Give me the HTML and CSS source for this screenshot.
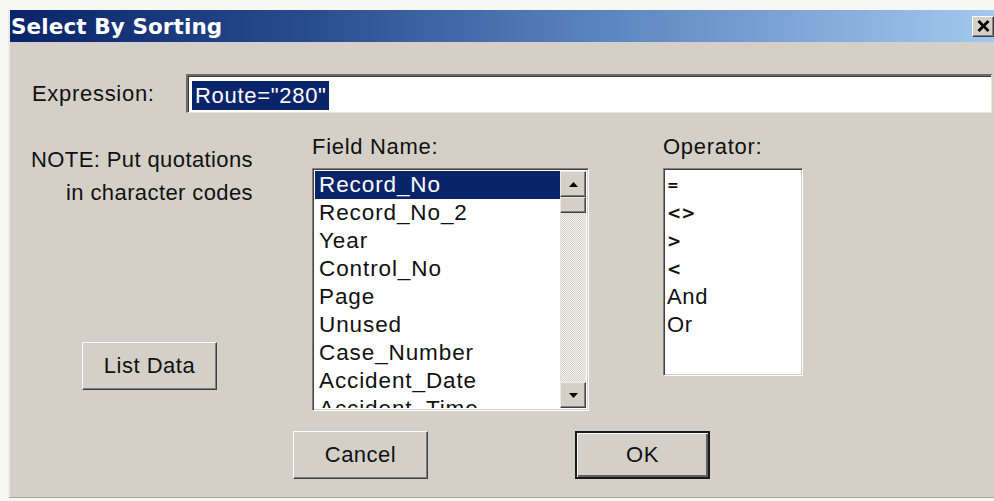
FILE: index.html
```html
<!DOCTYPE html>
<html lang="en">
<head>
<meta charset="utf-8">
<title>Select By Sorting</title>
<link rel="stylesheet" href="styles.css">
</head>
<body>
<div class="desktop">
  <div class="window">
    <div class="titlebar">
      <span class="title">Select By Sorting</span>
      <button class="close" aria-label="Close">
        <svg width="13" height="12" viewBox="0 0 13 12"><path d="M1.5 1 L11.5 11 M11.5 1 L1.5 11" stroke="#000" stroke-width="2.8" fill="none"/></svg>
      </button>
    </div>
    <div class="client">
      <div class="expr-row">
        <span class="expr-label">Expression:</span>
        <div class="textbox"><span class="sel">Route="280"</span></div>
      </div>

      <div class="main">
        <div class="left-col">
          <p class="note">NOTE: Put quotations<br>in character codes</p>
          <button class="btn list-btn">List Data</button>
        </div>

        <div class="field-col">
          <div class="cap">Field Name:</div>
          <div class="listbox fields">
            <ul class="items">
              <li class="selected">Record_No</li>
              <li>Record_No_2</li>
              <li>Year</li>
              <li>Control_No</li>
              <li>Page</li>
              <li>Unused</li>
              <li>Case_Number</li>
              <li>Accident_Date</li>
              <li>Accident_Time</li>
            </ul>
            <div class="scrollbar">
              <div class="sb-btn">
                <svg width="9" height="5" viewBox="0 0 9 5"><path d="M0 5 L4.5 0 L9 5 Z" fill="#000"/></svg>
              </div>
              <div class="sb-thumb"></div>
              <div class="sb-track"></div>
              <div class="sb-btn">
                <svg width="9" height="5" viewBox="0 0 9 5"><path d="M0 0 L9 0 L4.5 5 Z" fill="#000"/></svg>
              </div>
            </div>
          </div>
        </div>

        <div class="op-col">
          <div class="cap">Operator:</div>
          <div class="listbox ops">
            <ul class="items">
              <li class="sym eq">=</li>
              <li class="sym">&lt;&gt;</li>
              <li class="sym">&gt;</li>
              <li class="sym">&lt;</li>
              <li>And</li>
              <li>Or</li>
            </ul>
          </div>
        </div>
      </div>

      <div class="actions">
        <button class="btn">Cancel</button>
        <button class="btn default">OK</button>
      </div>
    </div>
  </div>
</div>
</body>
</html>
```

FILE: styles.css
```css
html, body {
  margin: 0;
  padding: 0;
  overflow: hidden;
  background: #f7f7f5;
}

body {
  width: 994px;
  height: 501px;
  font-family: "Liberation Sans", Arial, sans-serif;
  color: #111;
}

.desktop {
  padding-top: 10px;
  padding-left: 8px;
}

/* dialog frame */
.window {
  width: 1000px;
  height: 488px;
  background: #d4d0c8;
  border-left: 2px solid #ecebe6;
  box-sizing: border-box;
  border-bottom: 1px solid #a8a59e;
}

.titlebar {
  height: 32px;
  display: flex;
  align-items: center;
  padding-left: 1px;
  background: linear-gradient(to right, #0a246a 0%, #284d8f 30%, #5c86c0 60%, #a6caf0 100%);
}

.title {
  font-family: "DejaVu Sans", "Liberation Sans", sans-serif;
  font-weight: bold;
  font-size: 21.5px;
  color: #fff;
  letter-spacing: 0.1px;
}

.close {
  margin-left: auto;
  margin-right: 14px;
  width: 22px;
  height: 21px;
  padding: 0;
  display: flex;
  align-items: center;
  justify-content: center;
  background: #d4d0c8;
  border: 1px solid;
  border-color: #fff #404040 #404040 #fff;
  box-shadow: inset -1px -1px #808080;
}

/* dialog contents */
.client {
  font-size: 22px;
  letter-spacing: 0.7px;
}

.expr-row {
  display: flex;
  align-items: center;
  margin-top: 32px;
  height: 39px;
}

.expr-label {
  width: 154px;
  padding-left: 22px;
  box-sizing: content-box;
}

.textbox {
  width: 806px;
  height: 39px;
  box-sizing: border-box;
  background: #fff;
  border-style: solid;
  border-width: 2px 1px 1px 2px;
  border-color: #6e6c68 #e8e6e0 #e8e6e0 #6e6c68;
  box-shadow: inset 1px 1px #3a3a3a;
  padding: 2px 0 0 4px;
  display: flex;
  align-items: center;
}

.sel {
  background: #0a246a;
  color: #fff;
  height: 29px;
  line-height: 29px;
  padding: 0 2px 0 3px;
}

.main {
  display: flex;
  height: 298px;
}

.left-col {
  width: 281px;
  padding-left: 21px;
  display: flex;
  flex-direction: column;
}

.note {
  margin: 30px 0 0;
  width: 222px;
  text-align: right;
  line-height: 33px;
  letter-spacing: 0.4px;
}

.list-btn {
  margin-top: 133px;
  margin-left: 51px;
}

.cap {
  margin-top: 20px;
  height: 28px;
  line-height: 28px;
  margin-bottom: 7px;
}

.listbox {
  background: #fff;
  box-sizing: border-box;
  border: 1px solid;
  border-color: #808080 #fff #fff #808080;
  box-shadow: inset 1px 1px #404040, inset -1px -1px #d4d0c8;
  display: flex;
  overflow: hidden;
  padding: 2px;
}

.fields {
  width: 277px;
  height: 243px;
}

.op-col {
  margin-left: 74px;
}

.ops {
  width: 140px;
  height: 208px;
}

.items {
  list-style: none;
  margin: 0;
  padding: 0;
  flex: 1;
  overflow: hidden;
}

.items li {
  height: 28px;
  line-height: 28px;
  padding-left: 4px;
  white-space: nowrap;
}

.fields .items li {
  font-size: 22.5px;
  letter-spacing: 0.9px;
}

.items li.selected {
  background: #0a246a;
  color: #fff;
}

.ops .items li {
  padding-left: 1px;
}

.items li.sym {
  font-family: "DejaVu Sans", "Liberation Sans", sans-serif;
  font-size: 17px;
  font-weight: bold;
  letter-spacing: 0;
}

.items li.sym.eq {
  font-size: 14px;
}

/* vertical scrollbar */
.scrollbar {
  width: 26px;
  display: flex;
  flex-direction: column;
}

.sb-btn,
.sb-thumb {
  background: #d4d0c8;
  box-sizing: border-box;
  border: 1px solid;
  border-color: #ecebe6 #404040 #404040 #ecebe6;
  box-shadow: inset -1px -1px #808080;
}

.sb-btn {
  height: 26px;
  display: flex;
  align-items: center;
  justify-content: center;
}

.sb-thumb {
  height: 16px;
}

.sb-track {
  flex: 1;
  background-color: #e6e4de;
  background-image: repeating-conic-gradient(#d4d0c8 0 25%, #f4f3ef 0 50%);
  background-size: 2px 2px;
}

/* push buttons */
.btn {
  width: 135px;
  height: 48px;
  font-family: "Liberation Sans", Arial, sans-serif;
  font-size: 22px;
  letter-spacing: 0.5px;
  color: #111;
  background: #d4d0c8;
  box-sizing: border-box;
  border: 1px solid;
  border-color: #fff #404040 #404040 #fff;
  box-shadow: inset -1px -1px #808080;
  padding: 0;
}

.actions {
  display: flex;
  margin-top: 20px;
  padding-left: 283px;
  gap: 147px;
}

.btn.default {
  border: 2px solid #1a1a1a;
  box-shadow: inset 1px 1px #fff, inset -2px -2px #606060;
}
```
